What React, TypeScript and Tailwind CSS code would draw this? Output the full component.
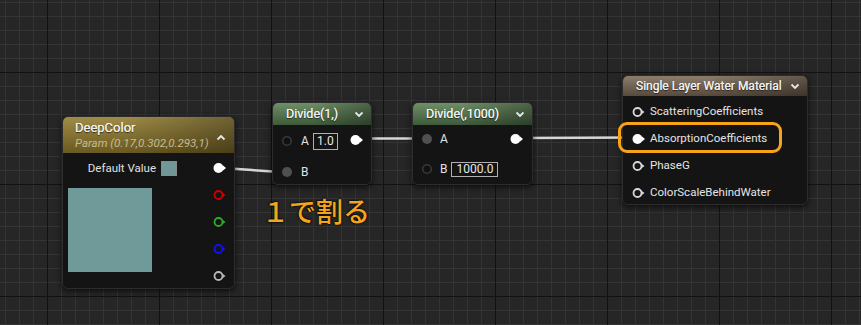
import React from "react";

const W = 861;
const H = 325;

function Grid() {
  const minorV: number[] = [];
  const minorH: number[] = [];
  for (let x = 5; x < W; x += 14) minorV.push(x);
  for (let y = 2; y < H; y += 14) minorH.push(y);
  const majorV = [47, 159, 271, 383, 495, 607, 719, 831];
  const majorH = [72, 184, 296];
  return (
    <svg className="absolute inset-0" width={W} height={H}>
      <rect width={W} height={H} fill="#262626" />
      {minorV.map((x) => (
        <line key={"v" + x} x1={x + 0.5} x2={x + 0.5} y1={0} y2={H} stroke="#343434" strokeWidth={1} />
      ))}
      {minorH.map((y) => (
        <line key={"h" + y} y1={y + 0.5} y2={y + 0.5} x1={0} x2={W} stroke="#343434" strokeWidth={1} />
      ))}
      {majorV.map((x) => (
        <line key={"V" + x} x1={x + 0.5} x2={x + 0.5} y1={0} y2={H} stroke="#121212" strokeWidth={1} />
      ))}
      {majorH.map((y) => (
        <line key={"H" + y} y1={y + 0.5} y2={y + 0.5} x1={0} x2={W} stroke="#121212" strokeWidth={1} />
      ))}
    </svg>
  );
}

function Wires() {
  return (
    <svg className="absolute inset-0" width={W} height={H}>
      <path d="M222 168 C 245 169, 255 171, 282 172" stroke="#d6d6d6" strokeWidth={2.5} fill="none" />
      <path d="M360 138.5 L 426 138.5" stroke="#d6d6d6" strokeWidth={2.5} fill="none" />
      <path d="M522 138 L 636 137.5" stroke="#d6d6d6" strokeWidth={2.5} fill="none" />
    </svg>
  );
}

type PinKind = "outFilled" | "outRing" | "inEmpty" | "inConnected" | "inRing" | "inFilled";

function Pin({ kind, color = "#ffffff" }: { kind: PinKind; color?: string }) {
  if (kind === "outFilled" || kind === "inFilled") {
    return (
      <svg width={14} height={12} viewBox="0 0 14 12" className="shrink-0">
        <circle cx={5.5} cy={6} r={5} fill="#ffffff" />
        <path d="M10 3.5 L13 6 L10 8.5 Z" fill="#ffffff" />
      </svg>
    );
  }
  if (kind === "outRing") {
    return (
      <svg width={14} height={12} viewBox="0 0 14 12" className="shrink-0">
        <circle cx={5.5} cy={6} r={4} fill="#151515" stroke={color} strokeWidth={1.8} />
        <path d="M9.5 3.8 L12.5 6 L9.5 8.2 Z" fill={color} />
      </svg>
    );
  }
  if (kind === "inRing") {
    return (
      <svg width={14} height={12} viewBox="0 0 14 12" className="shrink-0">
        <circle cx={5.5} cy={6} r={4} fill="#151515" stroke="#d8d8d8" strokeWidth={1.8} />
        <path d="M9.5 3.8 L12.5 6 L9.5 8.2 Z" fill="#d8d8d8" />
      </svg>
    );
  }
  if (kind === "inConnected") {
    return (
      <svg width={12} height={12} viewBox="0 0 12 12" className="shrink-0">
        <circle cx={6} cy={6} r={5} fill="#505050" />
      </svg>
    );
  }
  return (
    <svg width={12} height={12} viewBox="0 0 12 12" className="shrink-0">
      <circle cx={6} cy={6} r={4.3} fill="#111" stroke="#383838" strokeWidth={1.6} />
    </svg>
  );
}

function ChevronDown() {
  return (
    <svg width={10} height={7} viewBox="0 0 10 7" className="shrink-0">
      <path d="M1.5 1.5 L5 5 L8.5 1.5" stroke="#e8e8e8" strokeWidth={1.8} fill="none" />
    </svg>
  );
}

function ChevronUp() {
  return (
    <svg width={10} height={7} viewBox="0 0 10 7" className="shrink-0">
      <path d="M1.5 5.5 L5 2 L8.5 5.5" stroke="#e8e8e8" strokeWidth={1.8} fill="none" />
    </svg>
  );
}

const nodeBase =
  "absolute flex flex-col rounded-[6px] border border-[#2c2c2c] bg-[#141414] overflow-hidden shadow-[0_2px_6px_rgba(0,0,0,0.7)] font-['Roboto','Liberation_Sans',sans-serif] text-[#e2e2e2]";

const titleCls =
  "whitespace-nowrap font-normal leading-none text-[#eeeeee] [text-shadow:0_0_0.4px_#eeeeee,0_1px_1px_rgba(0,0,0,0.6)]";

function DeepColorNode() {
  return (
    <div className={nodeBase + " left-[62px] top-[116px] w-[173px] h-[173px]"}>
      <div className="h-[36px] shrink-0 flex items-center justify-between pl-[12px] pr-[8px] bg-[linear-gradient(90deg,rgba(0,0,0,0)_35%,rgba(0,0,0,0.3)),linear-gradient(180deg,#a08c48,#6a5921)]">
        <div className="flex flex-col leading-none">
          <span className={titleCls + " text-[13px]"}>DeepColor</span>
          <span className="mt-[4px] whitespace-nowrap text-[11.5px] italic text-[#c9bb8c]">Param (0.17,0.302,0.293,1)</span>
        </div>
        <div className="pt-[4px]">
          <ChevronUp />
        </div>
      </div>
      <div className="flex">
        <div className="flex flex-col w-[114px] pl-[5px] pt-[8px]">
          <div className="flex items-center justify-end gap-[5px] h-[15px]">
            <span className="whitespace-nowrap text-[11.5px] leading-none text-[#e0e0e0]">Default Value</span>
            <div className="w-[16px] h-[15px] bg-[#6f9896] border border-[#8a8a8a]" />
          </div>
          <div className="mt-[12px] w-[84px] h-[84px] bg-[#70999a]" />
        </div>
        <div className="flex flex-col pt-[9px] gap-[15px] ml-[36px]">
          <Pin kind="outFilled" />
          <Pin kind="outRing" color="#d00000" />
          <Pin kind="outRing" color="#2eaa2e" />
          <Pin kind="outRing" color="#1010ff" />
          <Pin kind="outRing" color="#b8b8b8" />
        </div>
      </div>
    </div>
  );
}

const divideHeader =
  "h-[22px] shrink-0 flex items-center justify-between pl-[13px] pr-[7px] bg-[linear-gradient(90deg,rgba(0,0,0,0)_40%,rgba(0,0,0,0.3)),linear-gradient(180deg,#6e8f66,#3f5a3a)]";

function DivideOne() {
  return (
    <div className={nodeBase + " left-[272px] top-[102px] w-[100px] h-[83px]"}>
      <div className={divideHeader}>
        <span className={titleCls + " text-[12.5px]"}>Divide(1,)</span>
        <ChevronDown />
      </div>
      <div className="flex flex-col pt-[7px] gap-[13px] pl-[8px] pr-[7px]">
        <div className="flex items-center h-[18px]">
          <Pin kind="inEmpty" />
          <span className="ml-[8px] text-[12px] leading-none">A</span>
          <div className="ml-[4px] w-[25px] h-[17px] border border-[#b0b0b0] flex items-center justify-center text-[12px] leading-none text-[#e8e8e8]">1.0</div>
          <div className="ml-auto -mt-[3px]">
            <Pin kind="outFilled" />
          </div>
        </div>
        <div className="flex items-center h-[18px]">
          <Pin kind="inConnected" />
          <span className="ml-[8px] text-[12px] leading-none">B</span>
        </div>
      </div>
    </div>
  );
}

function DivideTwo() {
  return (
    <div className={nodeBase + " left-[412px] top-[102px] w-[121px] h-[83px]"}>
      <div className={divideHeader}>
        <span className={titleCls + " text-[12.5px]"}>Divide(,1000)</span>
        <ChevronDown />
      </div>
      <div className="flex flex-col pt-[5px] gap-[12px] pl-[8px] pr-[8px]">
        <div className="flex items-center h-[18px]">
          <Pin kind="inConnected" />
          <span className="ml-[7px] text-[12px] leading-none">A</span>
          <div className="ml-auto">
            <Pin kind="outFilled" />
          </div>
        </div>
        <div className="flex items-center h-[18px]">
          <Pin kind="inEmpty" />
          <span className="ml-[7px] text-[12px] leading-none">B</span>
          <div className="ml-[4px] w-[47px] h-[15px] border border-[#b0b0b0] flex items-center justify-center text-[12px] leading-none text-[#e8e8e8]">1000.0</div>
        </div>
      </div>
    </div>
  );
}

function WaterNode() {
  const rows: { label: string; filled?: boolean }[] = [
    { label: "ScatteringCoefficients" },
    { label: "AbsorptionCoefficients", filled: true },
    { label: "PhaseG" },
    { label: "ColorScaleBehindWater" },
  ];
  return (
    <div className={nodeBase + " left-[622px] top-[75px] w-[186px] h-[130px]"}>
      <div className="h-[20px] shrink-0 flex items-center justify-between pl-[13px] pr-[7px] bg-[linear-gradient(90deg,rgba(0,0,0,0)_45%,rgba(0,0,0,0.3)),linear-gradient(180deg,#8c7d6b,#574a3d)]">
        <span className={titleCls + " text-[12px]"}>Single Layer Water Material</span>
        <ChevronDown />
      </div>
      <div className="flex flex-col pt-[7px] gap-[9px] pl-[9px]">
        {rows.map((r) => (
          <div key={r.label} className="flex items-center h-[18px]">
            <Pin kind={r.filled ? "inFilled" : "inRing"} />
            <span className="ml-[4px] whitespace-nowrap text-[11.5px] leading-none text-[#e4e4e4]">{r.label}</span>
          </div>
        ))}
      </div>
    </div>
  );
}

export default function App() {
  return (
    <div className="relative w-[861px] h-[325px] overflow-hidden bg-[#262626]">
      <Grid />
      <Wires />
      <DeepColorNode />
      <DivideOne />
      <DivideTwo />
      <WaterNode />
      <div className="absolute left-[618px] top-[122px] w-[164px] h-[31px] rounded-[9px] border-[3px] border-[#f7a41b]" />
      <div className="absolute left-[262px] top-[195px] text-[27px] leading-[32px] font-medium text-[#f4a51d] font-['Noto_Sans_CJK_JP',sans-serif] [text-shadow:0_0_2px_#000,0_0_2px_#000]">
        １で割る
      </div>
    </div>
  );
}
